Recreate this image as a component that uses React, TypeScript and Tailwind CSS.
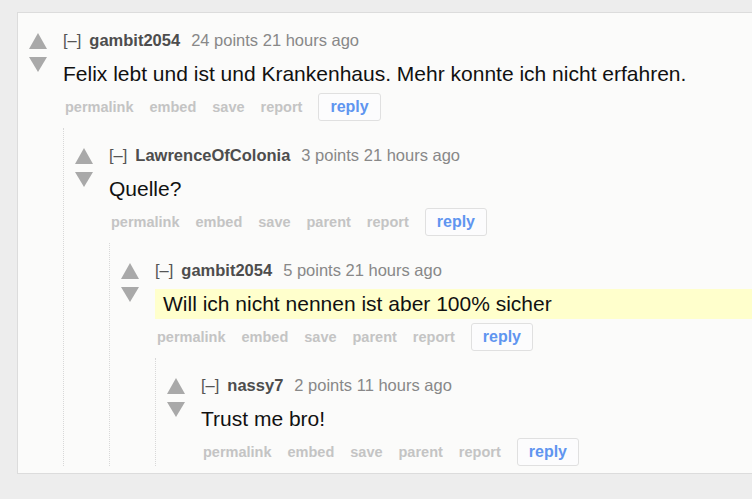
import React from 'react';

type Item = {
  user: string;
  points: string;
  time: string;
  body: string;
  highlight?: boolean;
  parent?: boolean;
  child?: Item;
};

const thread: Item = {
  user: 'gambit2054',
  points: '24 points',
  time: '21 hours ago',
  body: 'Felix lebt und ist und Krankenhaus. Mehr konnte ich nicht erfahren.',
  child: {
    user: 'LawrenceOfColonia',
    points: '3 points',
    time: '21 hours ago',
    body: 'Quelle?',
    parent: true,
    child: {
      user: 'gambit2054',
      points: '5 points',
      time: '21 hours ago',
      body: 'Will ich nicht nennen ist aber 100% sicher',
      highlight: true,
      parent: true,
      child: {
        user: 'nassy7',
        points: '2 points',
        time: '11 hours ago',
        body: 'Trust me bro!',
        parent: true,
      },
    },
  },
};

// vote arrows
function Arrows() {
  return (
    <div className="flex flex-col w-[18px] shrink-0 pt-[3px] gap-[8px] mr-[16px]">
      <svg width="18" height="16" viewBox="0 0 18 16">
        <polygon points="0,16 9,0 18,16" fill="#a9a9a9" />
      </svg>
      <svg width="18" height="15" viewBox="0 0 18 15">
        <polygon points="0,0 18,0 9,15" fill="#a9a9a9" />
      </svg>
    </div>
  );
}

function Comment({ c }: { c: Item }) {
  const links = c.parent ? ['permalink', 'embed', 'save', 'parent', 'report'] : ['permalink', 'embed', 'save', 'report'];
  return (
    <div className="flex pt-[17px]">
      <Arrows />
      <div className="flex-1 min-w-0">
        <div className="flex items-baseline text-[16.5px] leading-[20px] whitespace-nowrap">
          <span className="text-[#555]">[–]</span>
          <span className="ml-[8px] font-bold text-[#4d4d4d]">{c.user}</span>
          <span className="ml-[11px] text-[#888]">{c.points} {c.time}</span>
        </div>
        <div
          className={
            'mt-[9px] py-[2px] text-[21px] leading-[26px] text-[#111] whitespace-nowrap ' +
            (c.highlight ? 'bg-[#ffffcc] pl-[8px]' : '')
          }
        >
          {c.body}
        </div>
        <div className="mt-[4px] flex items-baseline whitespace-nowrap">
          {links.map((l) => (
            <span key={l} className="px-[2px] mr-[12px] text-[14.5px] font-bold text-[#c4c4c4]">
              {l}
            </span>
          ))}
          <span className="ml-[2px] rounded-[3px] border border-[#e0e0e0] bg-[#fcfcfd] px-[11px] text-[16px] leading-[26px] font-bold text-[#5f95f0]">
            reply
          </span>
        </div>
        {c.child && (
          <div className="mt-[7px] border-l border-dotted border-[#d8d8d8] pl-[11px]">
            <Comment c={c.child} />
          </div>
        )}
      </div>
    </div>
  );
}

export default function App() {
  return (
    <div className="h-[499px] w-full overflow-hidden bg-[#ededed] pt-[12px] pl-[17px] font-['Liberation_Sans',Arial,sans-serif]">
      <div className="border border-r-0 border-[#dcdcdc] bg-[#fbfbfa] pl-[11px] pb-[7px]">
        <Comment c={thread} />
      </div>
    </div>
  );
}
